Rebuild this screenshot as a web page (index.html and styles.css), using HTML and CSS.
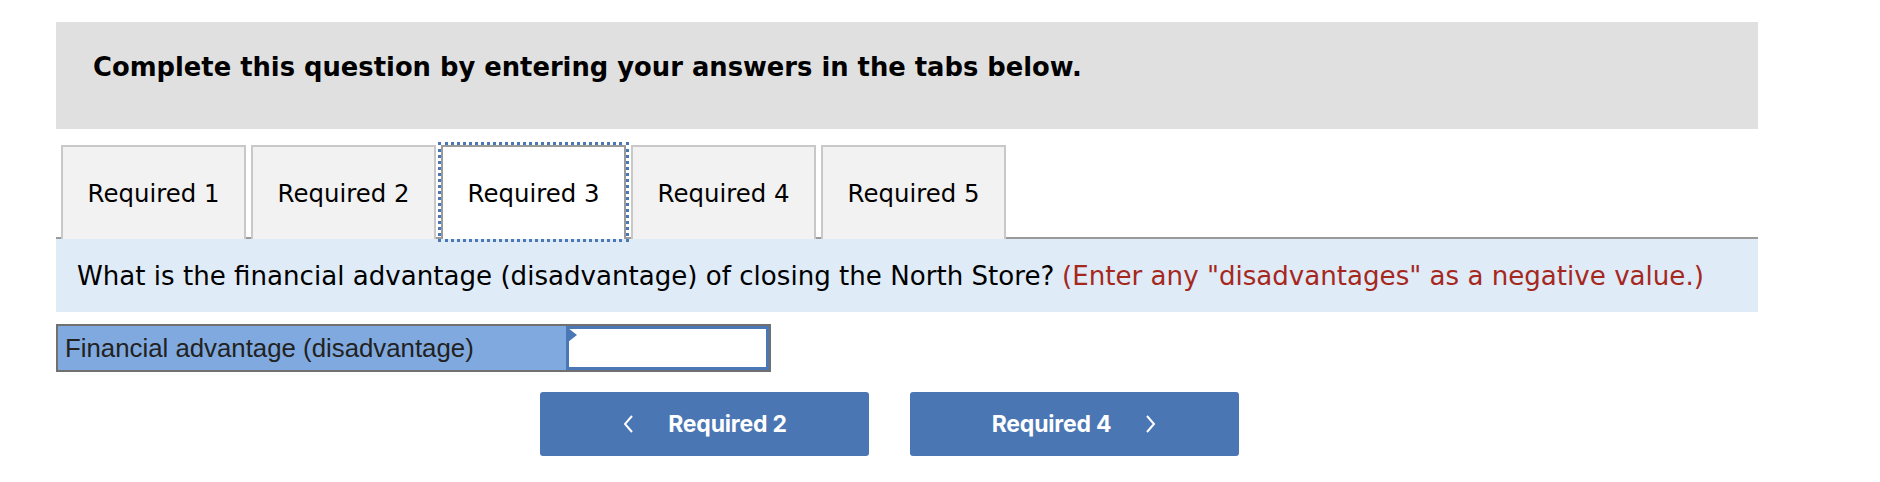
FILE: index.html
```html
<!DOCTYPE html>
<html>
<head>
<meta charset="utf-8">
<link rel="stylesheet" href="styles.css">
</head>
<body>
<div class="page">
  <div class="intro">
    <h1 class="intro-title">Complete this question by entering your answers in the tabs below.</h1>
  </div>

  <div class="tabs">
    <div class="tab">Required 1</div>
    <div class="tab">Required 2</div>
    <div class="tab tab-active">Required 3</div>
    <div class="tab">Required 4</div>
    <div class="tab">Required 5</div>
  </div>

  <div class="question">
    What is the financial advantage (disadvantage) of closing the North Store? <span class="hint">(Enter any "disadvantages" as a negative value.)</span>
  </div>

  <div class="answer-row">
    <div class="answer-label">Financial advantage (disadvantage)</div>
    <div class="answer-input"><span class="flag"></span></div>
  </div>

  <div class="nav">
    <div class="nav-btn">
      <svg class="chev" width="12" height="20" viewBox="0 0 12 20"><path d="M10 2 L3 10 L10 18" fill="none" stroke="#fff" stroke-width="2"/></svg>
      <span class="nav-text">Required 2</span>
    </div>
    <div class="nav-btn">
      <span class="nav-text">Required 4</span>
      <svg class="chev" width="12" height="20" viewBox="0 0 12 20"><path d="M2 2 L9 10 L2 18" fill="none" stroke="#fff" stroke-width="2"/></svg>
    </div>
  </div>
</div>
</body>
</html>
```

FILE: styles.css
```css
html, body {
  margin: 0;
  padding: 0;
  background: #ffffff;
}

.page {
  margin-left: 56px;
  width: 1702px;
  padding-top: 22px;
  font-family: "DejaVu Sans", Verdana, sans-serif;
  color: #000;
}

.intro {
  height: 107px;
  background: #e0e0e0;
  padding-left: 37px;
  padding-top: 29px;
  box-sizing: border-box;
}

.intro-title {
  margin: 0;
  font-size: 25.8px;
  line-height: 32px;
  font-weight: bold;
  color: #000;
}

.tabs {
  display: flex;
  gap: 5px;
  margin-top: 16px;
  padding-left: 5px;
  border-bottom: 2px solid #9a9a9a;
  height: 92px;
}

.tab {
  width: 185px;
  height: 94px;
  box-sizing: border-box;
  background: #f2f2f2;
  border: 2px solid #c8c8c8;
  border-bottom: none;
  display: flex;
  align-items: center;
  justify-content: center;
  font-size: 24.4px;
  color: #000;
  position: relative;
  z-index: 1;
}

.tab-active {
  background: #ffffff;
  border-color: #9a9a9a;
  outline: 3px dotted #4a77b6;
  outline-offset: 0;
  z-index: 2;
}

.question {
  height: 73px;
  background: #dfebf7;
  padding-left: 21px;
  display: flex;
  align-items: center;
  font-size: 26.1px;
  color: #000;
  white-space: nowrap;
}

.hint {
  color: #a5281e;
  margin-left: 0.3em;
}

.answer-row {
  display: flex;
  margin-top: 12px;
  width: 715px;
  height: 48px;
  box-sizing: border-box;
  border: 2px solid #707070;
}

.answer-label {
  width: 508px;
  background: #80aadf;
  display: flex;
  align-items: center;
  padding-left: 7px;
  box-sizing: border-box;
  font-family: "Liberation Sans", Arial, sans-serif;
  font-size: 25.8px;
  color: #222;
}

.answer-input {
  flex: 1;
  background: #fff;
  border: 3px solid #4a78b6;
  position: relative;
}

.flag {
  position: absolute;
  left: -1px;
  top: -1px;
  width: 0;
  height: 0;
  border-top: 7px solid transparent;
  border-bottom: 7px solid transparent;
  border-left: 9px solid #4a78b6;
}

.nav {
  display: flex;
  gap: 41px;
  margin-top: 20px;
  padding-left: 484px;
}

.nav-btn {
  width: 329px;
  height: 64px;
  background: #4a76b4;
  border-radius: 3px;
  display: flex;
  align-items: center;
  justify-content: center;
  gap: 34px;
  color: #fff;
}

.nav-text {
  font-family: Inter, Roboto, sans-serif;
  font-weight: bold;
  font-size: 23px;
  letter-spacing: -0.2px;
}

.chev {
  display: block;
}
```
